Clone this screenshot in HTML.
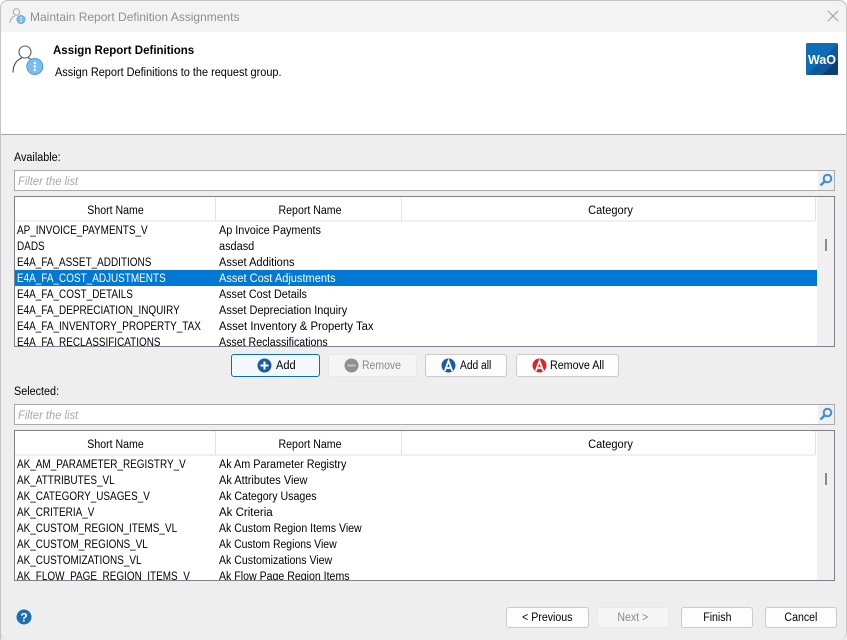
<!DOCTYPE html>
<html>
<head>
<meta charset="utf-8">
<style>
html,body{margin:0;padding:0;width:847px;height:640px;overflow:hidden;background:#fff;}
body{font-family:"Liberation Sans",sans-serif;font-size:11.5px;color:#000;position:relative;}
div,span,svg{position:absolute;box-sizing:border-box;white-space:nowrap;}
#win{left:0;top:0;width:847px;height:640px;background:#eeeeee;border:1px solid #c4c4c4;border-bottom:none;border-right:none;border-radius:8px 8px 0 0;overflow:hidden;}
.t{line-height:16px;height:16px;transform-origin:left center;}
.filter{left:14px;width:821px;height:21px;background:#fff;border:1px solid #a9a9b0;}
.filter .ph{left:3px;top:3px;color:#a8a8a8;font-style:italic;font-size:11.5px;line-height:16px;transform:scaleX(.97);transform-origin:left center;}
.filter .sb{right:0;top:0;width:16px;height:19px;background:#f0f0f0;}
.list{left:14px;width:821px;height:151px;background:#fff;border:1px solid #7d828a;overflow:hidden;}
.hdr{left:0;top:0;width:800px;height:25px;background:#fff;border-bottom:2px solid #f0f0f0;}
.hc{top:6px;line-height:16px;text-align:center;height:16px;transform:scaleX(.92);}
.div{top:0;width:1px;height:24px;background:#e4e4e4;}
.scr{left:802px;top:0;width:18px;height:150px;background:#f0f0f0;}
.thumb{left:8px;width:2px;height:12px;background:#8a8a8a;}
.sel{left:0;width:802px;height:16px;background:#0078d4;}
.c1{left:2px;margin-top:1px;transform:scaleX(.865);} .c2{left:204px;margin-top:1px;}
.w{color:#fff;}
.btn{height:23px;background:#fdfdfd;border:1px solid #cbcbcb;border-radius:3px;text-align:center;line-height:21px;}
.dis{background:#f5f5f5;border-color:#e8e8e8;color:#8a8a8a;}
.lbl{top:1px;line-height:21px;transform-origin:left center;}
.b2{height:21px;line-height:21px;}
.b2 b{font-weight:normal;display:inline-block;transform:scaleX(.92);}
</style>
</head>
<body>
<div id="win"></div>
<div style="left:0;top:1px;width:847px;height:31px;background:#f3f3f3;border-radius:8px 8px 0 0;"></div>
<div style="left:0;top:0;width:847px;height:640px;border:1px solid #c6c6c6;border-bottom:none;border-radius:8px 8px 8px 8px;"></div>

<svg style="left:9px;top:7px" width="18" height="18" viewBox="0 0 18 18">
<circle cx="7.500" cy="5" r="3.200" fill="none" stroke="#a8a8a8" stroke-width="1"/>
<path d="M1 16c0-4 2.500-6.500 5-7" fill="none" stroke="#a8a8a8"/>
<circle cx="12" cy="12.500" r="4.200" fill="#7db9ea" stroke="#5a9fd8" stroke-width=".6"/>
<path d="M12 10v5" stroke="#fff" stroke-width="1.400" stroke-dasharray="1.200 .8"/>
</svg>
<div class="t" style="left:30px;top:9px;color:#8f8f8f;font-size:12px;">Maintain Report Definition Assignments</div>
<svg style="left:827px;top:10px" width="12" height="12" viewBox="0 0 12 12"><path d="M.8.8l10.400 10.400M11.200.8L.8 11.200" stroke="#9a9a9a" stroke-width="1"/></svg>

<div style="left:1px;top:32px;width:845px;height:102px;background:#fff;"></div>
<div style="left:1px;top:134px;width:845px;height:1px;background:#a4a4a4;"></div>

<svg style="left:12px;top:43px" width="33" height="33" viewBox="0 0 33 33">
<circle cx="13" cy="9" r="6" fill="none" stroke="#5c5c5c" stroke-width="1.100"/>
<path d="M1 29.500c0-8 4-13 9-14.500M16 15c1.500.3 2.500.8 3.500 1.500" fill="none" stroke="#4a4a4a" stroke-width="1.100"/>
<circle cx="22.800" cy="23.500" r="8" fill="#7cbcf0" stroke="#4f9ede" stroke-width="1"/>
<circle cx="22.800" cy="20" r="1.200" fill="#fff"/><circle cx="22.800" cy="23.500" r="1.200" fill="#fff"/><circle cx="22.800" cy="27" r="1.200" fill="#fff"/>
</svg>
<div class="t" style="left:53px;top:43px;font-weight:bold;font-size:11.5px;">Assign Report Definitions</div>
<div class="t" style="left:55px;top:65px;font-size:11.5px;transform:scaleX(.95);">Assign Report Definitions to the request group.</div>

<svg style="left:806px;top:43px" width="32" height="32" viewBox="0 0 32 32">
<rect width="32" height="32" rx="1.500" fill="#0f6cb6"/>
<path d="M1 32L32 1v29.500a1.500 1.500 0 0 1-1.500 1.500z" fill="#11589a"/>
<path d="M16 32L32 16v14.500a1.500 1.500 0 0 1-1.500 1.500z" fill="#0f3f6e"/>
<text x="16" y="21" text-anchor="middle" font-family="Liberation Sans,sans-serif" font-weight="bold" font-size="12.500" fill="#fff">WaO</text>
</svg>

<div class="t" style="left:14px;top:150px;transform:scaleX(.94);">Available:</div>
<div class="filter" style="top:170px;"><div class="ph">Filter the list</div><div class="sb"></div>
<svg style="right:1px;top:2px" width="14" height="14" viewBox="0 0 14 14"><circle cx="8.500" cy="5.500" r="3.800" fill="none" stroke="#3a8fd8" stroke-width="2"/><path d="M5.500 8.500L1.500 12.500" stroke="#3a8fd8" stroke-width="2.400"/></svg></div>

<div class="list" style="top:196px;">
<div class="t c1" style="top:25px;">AP_INVOICE_PAYMENTS_V</div><div class="t c2" style="top:25px;transform:scaleX(.944);">Ap Invoice Payments</div>
<div class="t c1" style="top:41px;">DADS</div><div class="t c2" style="top:41px;transform:scaleX(.95);">asdasd</div>
<div class="t c1" style="top:57px;">E4A_FA_ASSET_ADDITIONS</div><div class="t c2" style="top:57px;transform:scaleX(.96);">Asset Additions</div>
<div class="sel" style="top:73px;"></div>
<div class="t c1 w" style="top:73px;">E4A_FA_COST_ADJUSTMENTS</div><div class="t c2 w" style="top:73px;transform:scaleX(.96);">Asset Cost Adjustments</div>
<div class="t c1" style="top:89px;">E4A_FA_COST_DETAILS</div><div class="t c2" style="top:89px;transform:scaleX(.936);">Asset Cost Details</div>
<div class="t c1" style="top:105px;">E4A_FA_DEPRECIATION_INQUIRY</div><div class="t c2" style="top:105px;transform:scaleX(.955);">Asset Depreciation Inquiry</div>
<div class="t c1" style="top:121px;">E4A_FA_INVENTORY_PROPERTY_TAX</div><div class="t c2" style="top:121px;transform:scaleX(.98);">Asset Inventory &amp; Property Tax</div>
<div class="t c1" style="top:137px;">E4A_FA_RECLASSIFICATIONS</div><div class="t c2" style="top:137px;transform:scaleX(.924);">Asset Reclassifications</div>
<div class="hdr"></div>
<div class="hc" style="left:0;width:201px;">Short Name</div><div class="div" style="left:200px;"></div>
<div class="hc" style="left:202px;width:186px;">Report Name</div><div class="div" style="left:386px;"></div>
<div class="hc" style="left:389px;width:413px;transform:scaleX(.96);">Category</div><div class="div" style="left:800px;"></div>
<div class="scr"><div class="thumb" style="top:42px;"></div></div>
</div>

<div class="btn" style="left:231px;top:354px;width:89px;background:#f2f8fd;border-color:#0b6cc0;"><span class="lbl" style="left:44px;transform:scaleX(.96);">Add</span>
<svg style="left:25px;top:3px" width="15" height="15" viewBox="0 0 15 15"><circle cx="7.500" cy="7.500" r="7" fill="#1c5c9e"/><path d="M7.500 3.500v8M3.500 7.500h8" stroke="#fff" stroke-width="2"/></svg></div>
<div class="btn dis" style="left:328px;top:354px;width:89px;"><span class="lbl" style="left:33px;transform:scaleX(.91);">Remove</span>
<svg style="left:15px;top:3px" width="15" height="15" viewBox="0 0 15 15"><circle cx="7.500" cy="7.500" r="7" fill="#8f8f8f"/><path d="M3.500 7.500h8" stroke="#c4c4c4" stroke-width="2"/></svg></div>
<div class="btn" style="left:425px;top:354px;width:82px;"><span class="lbl" style="left:34px;transform:scaleX(.89);">Add all</span>
<svg style="left:15px;top:3px" width="15" height="15" viewBox="0 0 15 15"><circle cx="7.500" cy="7.500" r="7" fill="#1c5c9e"/><path d="M3.800 13L7.500 3l3.700 10M5 10h5" fill="none" stroke="#fff" stroke-width="1.800"/></svg></div>
<div class="btn" style="left:516px;top:354px;width:103px;"><span class="lbl" style="left:33px;transform:scaleX(.93);">Remove All</span>
<svg style="left:15px;top:3px" width="15" height="15" viewBox="0 0 15 15"><circle cx="7.500" cy="7.500" r="7" fill="#e3202e"/><path d="M3.800 13L7.500 3l3.700 10M5 10h5" fill="none" stroke="#fff" stroke-width="1.800"/></svg></div>

<div class="t" style="left:14px;top:384px;transform:scaleX(.94);">Selected:</div>
<div class="filter" style="top:404px;"><div class="ph">Filter the list</div><div class="sb"></div>
<svg style="right:1px;top:2px" width="14" height="14" viewBox="0 0 14 14"><circle cx="8.500" cy="5.500" r="3.800" fill="none" stroke="#3a8fd8" stroke-width="2"/><path d="M5.500 8.500L1.500 12.500" stroke="#3a8fd8" stroke-width="2.400"/></svg></div>

<div class="list" style="top:430px;">
<div class="t c1" style="top:25px;">AK_AM_PARAMETER_REGISTRY_V</div><div class="t c2" style="top:25px;transform:scaleX(.94);">Ak Am Parameter Registry</div>
<div class="t c1" style="top:41px;">AK_ATTRIBUTES_VL</div><div class="t c2" style="top:41px;transform:scaleX(.957);">Ak Attributes View</div>
<div class="t c1" style="top:57px;">AK_CATEGORY_USAGES_V</div><div class="t c2" style="top:57px;transform:scaleX(.925);">Ak Category Usages</div>
<div class="t c1" style="top:73px;">AK_CRITERIA_V</div><div class="t c2" style="top:73px;">Ak Criteria</div>
<div class="t c1" style="top:89px;">AK_CUSTOM_REGION_ITEMS_VL</div><div class="t c2" style="top:89px;transform:scaleX(.92);">Ak Custom Region Items View</div>
<div class="t c1" style="top:105px;">AK_CUSTOM_REGIONS_VL</div><div class="t c2" style="top:105px;transform:scaleX(.908);">Ak Custom Regions View</div>
<div class="t c1" style="top:121px;">AK_CUSTOMIZATIONS_VL</div><div class="t c2" style="top:121px;transform:scaleX(.919);">Ak Customizations View</div>
<div class="t c1" style="top:137px;">AK_FLOW_PAGE_REGION_ITEMS_V</div><div class="t c2" style="top:137px;transform:scaleX(.92);">Ak Flow Page Region Items</div>
<div class="hdr"></div>
<div class="hc" style="left:0;width:201px;">Short Name</div><div class="div" style="left:200px;"></div>
<div class="hc" style="left:202px;width:186px;">Report Name</div><div class="div" style="left:386px;"></div>
<div class="hc" style="left:389px;width:413px;transform:scaleX(.96);">Category</div><div class="div" style="left:800px;"></div>
<div class="scr"><div class="thumb" style="top:42px;"></div></div>
</div>

<svg style="left:16px;top:609px" width="16" height="16" viewBox="0 0 16 16"><circle cx="8" cy="8" r="7.500" fill="#1c6fb4"/><text x="8" y="12.500" text-anchor="middle" font-family="Liberation Sans,sans-serif" font-weight="bold" font-size="12" fill="#fff">?</text></svg>

<div class="btn b2" style="left:506px;top:607px;width:83px;"><b>&lt; Previous</b></div>
<div class="btn dis b2" style="left:597px;top:607px;width:72px;"><b>Next &gt;</b></div>
<div class="btn b2" style="left:681px;top:607px;width:72px;"><b>Finish</b></div>
<div class="btn b2" style="left:765px;top:607px;width:72px;"><b>Cancel</b></div>
</body>
</html>
